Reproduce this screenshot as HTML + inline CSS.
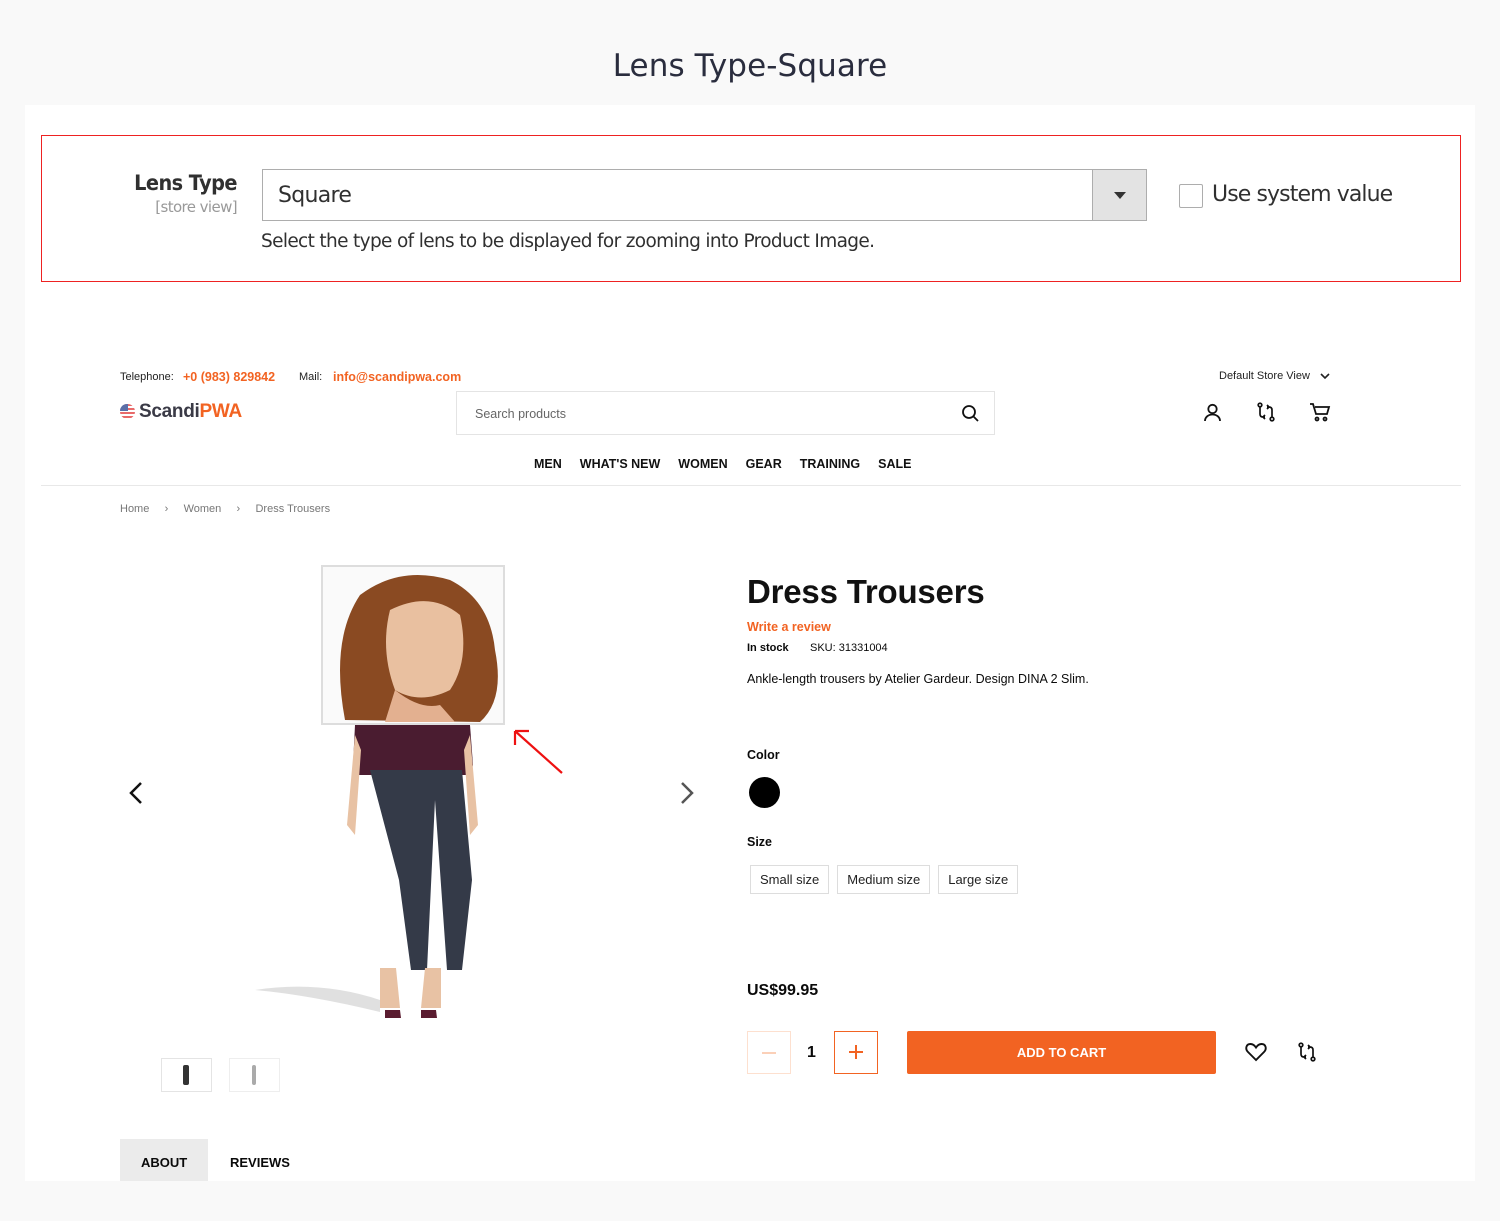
<!DOCTYPE html>
<html><head><meta charset="utf-8"><style>
*{margin:0;padding:0;box-sizing:border-box}
body{width:1500px;height:1221px;background:#f9f9f9;font-family:"Liberation Sans",Arial,sans-serif;position:relative;overflow:hidden;color:#0a0a0a}
.a{position:absolute}
.card{position:absolute;left:25px;top:105px;width:1450px;height:1076px;background:#fff}
.title{position:absolute;top:48px;width:1500px;text-align:center;font-family:"DejaVu Sans",sans-serif;font-size:31px;color:#2a2d3e;letter-spacing:0.1px}
.op{font-family:"DejaVu Sans",sans-serif}
.nav span{margin-right:18px}
.btn{border:1px solid #ddd;height:29px;line-height:27px;font-size:13px;padding:0 9px;display:inline-block;color:#222}
</style></head><body>
<div class="title">Lens Type-Square</div>
<div class="card"></div>
<div class="a" style="left:41px;top:135px;width:1420px;height:147px;border:1px solid #e22"></div>
<div class="a op" style="left:90px;top:171px;width:147px;text-align:right;font-size:21px;color:#303030;letter-spacing:-0.6px;font-weight:bold;transform:scaleX(.92);transform-origin:right">Lens Type</div>
<div class="a op" style="left:100px;top:198px;width:137px;text-align:right;font-size:15px;color:#999;letter-spacing:-0.6px">[store view]</div>
<div class="a" style="left:262px;top:169px;width:885px;height:52px;border:1px solid #adadad;background:#fff"></div>
<div class="a" style="left:1092px;top:170px;width:54px;height:50px;background:#e3e3e3;border-left:1px solid #adadad"></div>
<div class="a" style="left:1114px;top:192px;width:0;height:0;border-left:6px solid transparent;border-right:6px solid transparent;border-top:7px solid #333"></div>
<div class="a op" style="left:278px;top:183px;font-size:22px;color:#303030;letter-spacing:-0.7px">Square</div>
<div class="a op" style="left:261px;top:231px;font-size:18.5px;color:#303030;letter-spacing:-0.65px">Select the type of lens to be displayed for zooming into Product Image.</div>
<div class="a" style="left:1179px;top:184px;width:24px;height:24px;border:1px solid #adadad;border-radius:2px"></div>
<div class="a op" style="left:1212px;top:182px;font-size:22px;color:#303030;letter-spacing:-0.9px">Use system value</div>

<div class="a" style="left:120px;top:371px;font-size:11px;color:#222">Telephone:</div>
<div class="a" style="left:183px;top:370px;font-size:12.5px;color:#f26322;font-weight:bold">+0 (983) 829842</div>
<div class="a" style="left:299px;top:371px;font-size:11px;color:#222">Mail:</div>
<div class="a" style="left:333px;top:370px;font-size:12.5px;color:#f26322;font-weight:bold">info@scandipwa.com</div>
<div class="a" style="left:120px;top:404px;width:15px;height:15px;border-radius:50%;background:repeating-linear-gradient(#e86a6a 0 2px,#fff 2px 4px)"></div>
<div class="a" style="left:120px;top:404px;width:8px;height:7px;background:#5b6fa8;border-radius:8px 0 0 0"></div>
<div class="a" style="left:139px;top:401px;font-size:19px;font-weight:bold;color:#3a3a46;letter-spacing:-0.3px">Scandi<span style="color:#f26322">PWA</span></div>
<div class="a" style="left:456px;top:391px;width:539px;height:44px;border:1px solid #e4e4e4"></div>
<div class="a" style="left:475px;top:407px;font-size:12.5px;color:#666">Search products</div>
<svg class="a" style="left:961px;top:404px" width="19" height="19" viewBox="0 0 19 19" fill="none" stroke="#111" stroke-width="1.8"><circle cx="8" cy="8" r="6"/><path d="M12.5 12.5L17 17"/></svg>
<div class="a" style="left:1219px;top:370px;font-size:11px;color:#222">Default Store View</div>
<svg class="a" style="left:1320px;top:372px" width="10" height="8" viewBox="0 0 10 8" fill="none" stroke="#222" stroke-width="1.6"><path d="M1 2l4 4 4-4"/></svg>
<svg class="a" style="left:1203px;top:403px" width="19" height="19" viewBox="0 0 19 19" fill="none" stroke="#111" stroke-width="1.8"><circle cx="9.5" cy="6" r="4.2"/><path d="M2 18c0-4 3.5-6.5 7.5-6.5S17 14 17 18"/></svg>
<svg class="a" style="left:1256px;top:402px" width="20" height="20" viewBox="0 0 20 20" fill="none" stroke="#111" stroke-width="1.7"><circle cx="4" cy="3" r="1.8"/><circle cx="16" cy="17" r="1.8"/><path d="M4 5v7c0 2 1 3 3 3h2M16 15V8c0-2-1-3-3-3h-2M9 13l-2 2 2 2M11 3l2 2-2 2"/></svg>
<svg class="a" style="left:1309px;top:402px" width="22" height="21" viewBox="0 0 22 21" fill="none" stroke="#111" stroke-width="1.8"><path d="M1 2h3l3 10h11l2-7H6"/><circle cx="8" cy="17" r="1.5"/><circle cx="16" cy="17" r="1.5"/></svg>
<div class="a nav" style="left:534px;top:457px;font-size:12.5px;font-weight:bold;color:#111;white-space:nowrap"><span>MEN</span><span>WHAT'S NEW</span><span>WOMEN</span><span>GEAR</span><span>TRAINING</span><span>SALE</span></div>
<div class="a" style="left:41px;top:485px;width:1420px;height:1px;background:#e8e8e8"></div>
<div class="a" style="left:120px;top:503px;font-size:11px;color:#777">Home &nbsp;&nbsp;&nbsp;&nbsp;›&nbsp;&nbsp;&nbsp;&nbsp; Women &nbsp;&nbsp;&nbsp;&nbsp;›&nbsp;&nbsp;&nbsp;&nbsp; Dress Trousers</div>

<svg class="a" style="left:125px;top:780px" width="20" height="26" viewBox="0 0 20 26" fill="none" stroke="#111" stroke-width="2.5"><path d="M16 3L6 13l10 10"/></svg>
<svg class="a" style="left:678px;top:780px" width="20" height="26" viewBox="0 0 20 26" fill="none" stroke="#555" stroke-width="2.5"><path d="M4 3l10 10L4 23"/></svg>
<svg class="a" style="left:250px;top:560px" width="330" height="470" viewBox="250 560 330 470">
<path d="M255 990 Q320 980 380 1000 L380 1012 Q310 995 255 990Z" fill="#ccc" opacity=".6"/>
<path d="M355 725h115l3 40-3 10H358l-5-10z" fill="#4a1c30"/>
<path d="M355 735l-8 90 8 10 6-85z M470 735l8 90-8 10-6-85z" fill="#e8c2a4"/>
<path d="M370 770h92l10 110-10 90h-15l-12-170-8 170h-16l-12-90z" fill="#343a48"/>
<path d="M380 968h16l4 40h-20z M425 968h16l0 40h-20z" fill="#e8c2a4"/>
<path d="M385 1010h15l1 8h-16z M421 1010h15l1 8h-16z" fill="#5a1c30"/>
<rect x="322" y="566" width="182" height="158" fill="#fafafa"/>
<path d="M345 720 Q330 640 360 595 Q400 565 450 580 Q490 600 495 650 Q505 700 480 722Z" fill="#8a4a22"/>
<path d="M390 610 Q430 590 460 615 Q470 660 450 690 Q420 705 395 690 Q380 650 390 610Z" fill="#e9c0a0"/>
<path d="M395 690 Q420 710 440 705 L455 722 H385Z" fill="#e3b090"/>
<rect x="322" y="566" width="182" height="158" fill="none" stroke="#ddd" stroke-width="2"/>
<path d="M562 773L515 731M515 731v14M515 731h14" stroke="#e11" stroke-width="2.2" fill="none"/>
</svg>
<div class="a" style="left:161px;top:1058px;width:51px;height:34px;border:1px solid #e4e4e4"></div>
<div class="a" style="left:183px;top:1065px;width:6px;height:20px;background:#333;border-radius:2px"></div>
<div class="a" style="left:229px;top:1058px;width:51px;height:34px;border:1px solid #eee"></div>
<div class="a" style="left:252px;top:1065px;width:4px;height:20px;background:#aaa;border-radius:2px"></div>
<div class="a" style="left:120px;top:1139px;width:88px;height:42px;background:#ebebeb"></div>
<div class="a" style="left:141px;top:1155px;font-size:13px;font-weight:bold">ABOUT</div>
<div class="a" style="left:230px;top:1155px;font-size:13px;font-weight:bold">REVIEWS</div>

<div class="a" style="left:747px;top:573px;font-size:33px;font-weight:bold;color:#111;letter-spacing:-0.2px">Dress Trousers</div>
<div class="a" style="left:747px;top:620px;font-size:12.5px;font-weight:bold;color:#f26322">Write a review</div>
<div class="a" style="left:747px;top:642px;font-size:11px;font-weight:bold">In stock</div>
<div class="a" style="left:810px;top:642px;font-size:11px">SKU: 31331004</div>
<div class="a" style="left:747px;top:672px;font-size:12.5px">Ankle-length trousers by Atelier Gardeur. Design DINA 2 Slim.</div>
<div class="a" style="left:747px;top:748px;font-size:12.5px;font-weight:bold">Color</div>
<div class="a" style="left:749px;top:777px;width:31px;height:31px;border-radius:50%;background:#000"></div>
<div class="a" style="left:747px;top:835px;font-size:12.5px;font-weight:bold">Size</div>
<div class="a" style="left:750px;top:865px;white-space:nowrap"><span class="btn">Small size</span><span class="btn" style="margin-left:8px">Medium size</span><span class="btn" style="margin-left:8px">Large size</span></div>
<div class="a" style="left:747px;top:982px;font-size:16px;font-weight:bold">US$99.95</div>
<div class="a" style="left:747px;top:1031px;width:44px;height:43px;border:1px solid #fde0cf"></div>
<div class="a" style="left:762px;top:1052px;width:14px;height:1.5px;background:#fbd0b8"></div>
<div class="a" style="left:807px;top:1044px;font-size:16px;font-weight:bold">1</div>
<div class="a" style="left:834px;top:1031px;width:44px;height:43px;border:1.5px solid #f26322"></div>
<div class="a" style="left:849px;top:1051px;width:14px;height:1.8px;background:#f26322"></div>
<div class="a" style="left:855px;top:1045px;width:1.8px;height:14px;background:#f26322"></div>
<div class="a" style="left:907px;top:1031px;width:309px;height:43px;background:#f26322;border-radius:2px;color:#fff;font-size:13px;font-weight:bold;text-align:center;line-height:43px">ADD TO CART</div>
<svg class="a" style="left:1245px;top:1042px" width="22" height="20" viewBox="0 0 22 20" fill="none" stroke="#111" stroke-width="1.9"><path d="M11 18L3 10C0 7 1 2 5.5 2 8 2 10 4 11 5.5 12 4 14 2 16.5 2 21 2 22 7 19 10z"/></svg>
<svg class="a" style="left:1297px;top:1042px" width="20" height="20" viewBox="0 0 20 20" fill="none" stroke="#111" stroke-width="1.7"><circle cx="4" cy="3" r="1.8"/><circle cx="16" cy="17" r="1.8"/><path d="M4 5v7c0 2 1 3 3 3h2M16 15V8c0-2-1-3-3-3h-2M9 13l-2 2 2 2M11 3l2 2-2 2"/></svg>
</body></html>
